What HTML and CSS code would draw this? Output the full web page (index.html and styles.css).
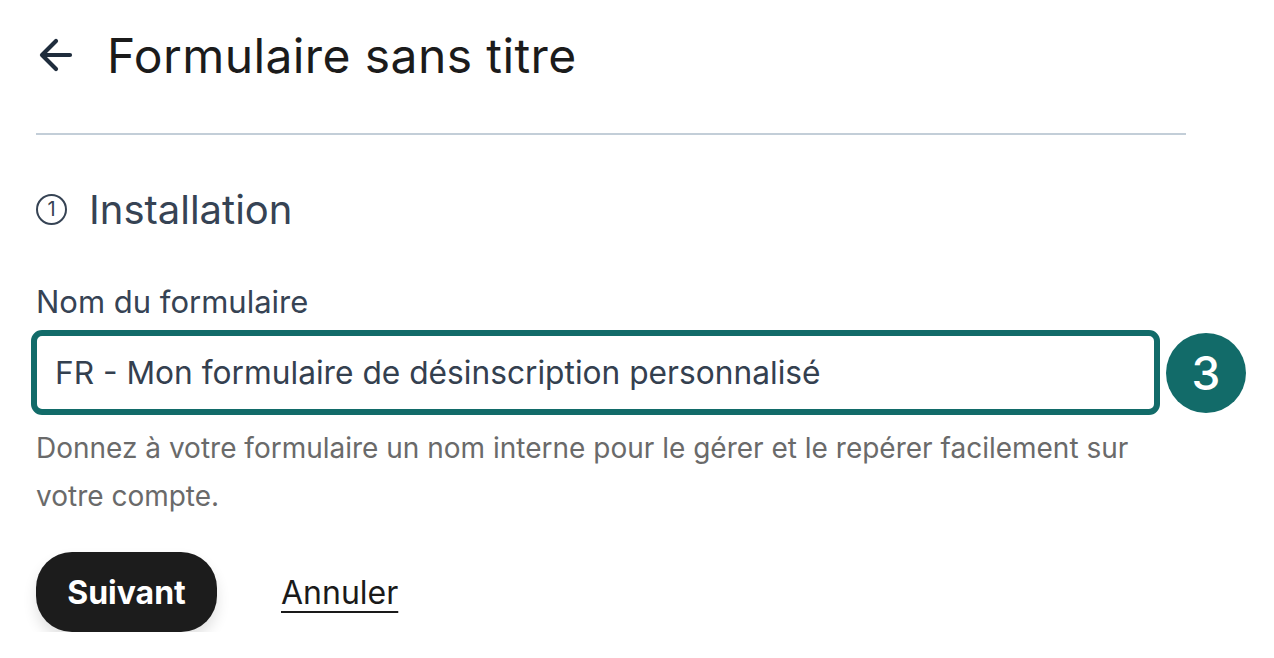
FILE: index.html
```html
<!DOCTYPE html>
<html lang="fr">
<head>
<meta charset="utf-8">
<link rel="stylesheet" href="styles.css">
</head>
<body>
<div class="page">
  <header class="header">
    <svg class="back" width="34" height="34" viewBox="0 0 34 34" fill="none" stroke="#1f2d3d" stroke-width="4.2" stroke-linecap="round" stroke-linejoin="round"><path d="M31 17H4"/><path d="M17 3L3 17l14 14"/></svg>
    <h1 class="title">Formulaire sans titre</h1>
  </header>
  <hr class="divider">
  <h2 class="step"><span class="step-num">1</span><span>Installation</span></h2>
  <label class="label" for="name">Nom du formulaire</label>
  <div class="field-row">
    <div class="input" id="name">FR - Mon formulaire de désinscription personnalisé</div>
    <div class="badge">3</div>
  </div>
  <p class="help">Donnez à votre formulaire un nom interne pour le gérer et le repérer facilement sur votre compte.</p>
  <div class="actions">
    <button class="btn">Suivant</button>
    <a class="cancel" href="#">Annuler</a>
  </div>
</div>
</body>
</html>
```
FILE: styles.css
```css
html, body { margin: 0; padding: 0; background: #fff; }
body { font-family: Inter, "Noto Sans", sans-serif; }
.page { padding: 24px 0 0 36px; }
.header { display: flex; align-items: center; gap: 34px; height: 62px; }
.back { display: block; margin-left: 3px; }
.title { margin: 0; font-size: 48px; font-weight: 400; color: #1b1b1b; letter-spacing: 0.4px; }
.divider { border: 0; border-top: 2px solid #c3ced8; margin: 47px 0 0 0; width: 1150px; }
.step { margin: 50px 0 0 0; display: flex; align-items: center; gap: 22px; font-size: 40px; font-weight: 400; color: #364354; height: 48px; }
.step-num { box-sizing: border-box; width: 31px; height: 31px; border: 2px solid #364354; border-radius: 50%; font-size: 20px; display: flex; align-items: center; justify-content: center; line-height: 1; padding-bottom: 1px; }
.label { display: block; margin-top: 50px; font-size: 31px; color: #364354; }
.field-row { display: flex; align-items: center; gap: 6px; margin-top: 10px; margin-left: -5px; }
.input { box-sizing: border-box; width: 1129px; flex: none; height: 85px; border: 6px solid #126b69; border-radius: 11px; padding: 0 18px; display: flex; align-items: center; font-size: 31.7px; color: #34404f; }
.badge { width: 80px; height: 80px; flex: none; border-radius: 50%; background: #126b69; color: #fff; display: flex; align-items: center; justify-content: center; font-size: 46px; font-weight: 500; }
.help { margin: 9px 0 0 0; font-size: 28px; line-height: 48px; color: #6a6a6a; width: 1110px; }
.actions { display: flex; align-items: center; gap: 64px; margin-top: 32px; }
.btn { width: 181px; height: 80px; border: 0; border-radius: 36px; background: #1c1c1c; color: #fff; font-family: inherit; font-size: 32px; font-weight: 700; box-shadow: 0 8px 14px rgba(0,0,0,0.12); }
.cancel { font-size: 32px; color: #1a1a1a; text-decoration: underline; text-underline-offset: 7px; text-decoration-thickness: 2px; }
```
